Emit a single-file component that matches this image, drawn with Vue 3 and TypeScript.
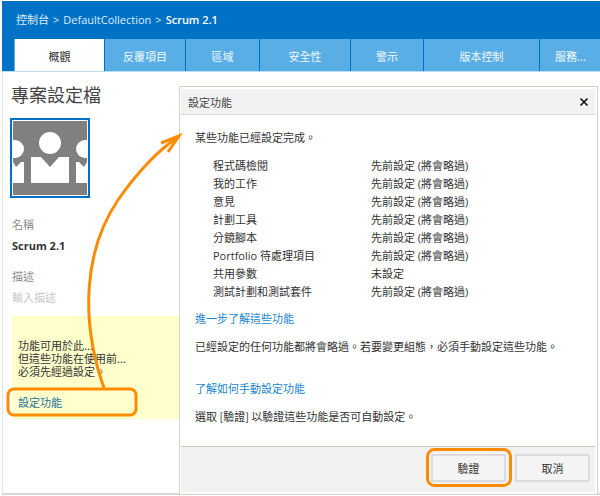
<script setup lang="ts">
interface Tab {
  label: string;
  width: number;
}

interface Feature {
  name: string;
  status: string;
}

const tabs: Tab[] = [
  { label: '概觀', width: 89 },
  { label: '反覆項目', width: 80 },
  { label: '區域', width: 73 },
  { label: '安全性', width: 90 },
  { label: '警示', width: 72 },
  { label: '版本控制', width: 115 },
  { label: '服務...', width: 61 },
];

const skipped = '先前設定 (將會略過)';

const features: Feature[] = [
  { name: '程式碼檢閱', status: skipped },
  { name: '我的工作', status: skipped },
  { name: '意見', status: skipped },
  { name: '計劃工具', status: skipped },
  { name: '分鏡腳本', status: skipped },
  { name: 'Portfolio 待處理項目', status: skipped },
  { name: '共用參數', status: '未設定' },
  { name: '測試計劃和測試套件', status: skipped },
];
</script>

<template>
  <div class="page">
    <header class="topbar">
      <div class="crumbs">
        <span>控制台</span>
        <span>&gt;</span>
        <span>DefaultCollection</span>
        <span>&gt;</span>
        <b>Scrum 2.1</b>
      </div>
      <nav class="tabs">
        <div
          v-for="(tab, i) in tabs"
          :key="tab.label"
          class="tab"
          :class="{ active: i === 0 }"
          :style="{ width: tab.width + 'px' }"
        >
          {{ tab.label }}
        </div>
      </nav>
    </header>

    <main class="profile">
      <h1>專案設定檔</h1>
      <div class="avatar">
        <svg width="74" height="74" viewBox="0 0 74 74">
          <rect width="74" height="74" fill="#808080" />
          <circle cx="37" cy="22" r="11" fill="#fff" />
          <circle cx="2" cy="28" r="9" fill="#fff" />
          <circle cx="72" cy="28" r="9" fill="#fff" />
          <path d="M18 36H28L37 46L46 36H56V62H18z" fill="#fff" />
          <path d="M0 41L3 46L8 41H11V62H0z" fill="#fff" />
          <path d="M74 41L71 46L66 41H63V62H74z" fill="#fff" />
        </svg>
      </div>
      <div class="label name-label">名稱</div>
      <div class="name">Scrum 2.1</div>
      <div class="label desc-label">描述</div>
      <div class="placeholder">輸入描述</div>
      <div class="notice">
        <p>功能可用於此...<br />但這些功能在使用前...<br />必須先經過設定。</p>
        <a>設定功能</a>
      </div>
    </main>

    <section class="dialog">
      <div class="dialog-title">
        <span>設定功能</span>
        <svg width="10" height="10" viewBox="0 0 10 10">
          <path d="M1.5 1.5l7 7M8.5 1.5l-7 7" stroke="#111" stroke-width="1.6" fill="none" />
        </svg>
      </div>
      <div class="dialog-body">
        <p class="intro">某些功能已經設定完成。</p>
        <div class="features">
          <template v-for="f in features" :key="f.name">
            <span>{{ f.name }}</span>
            <span>{{ f.status }}</span>
          </template>
        </div>
        <a class="learn">進一步了解這些功能</a>
        <p class="skip-note">已經設定的任何功能都將會略過。若要變更組態，必須手動設定這些功能。</p>
        <a class="manual">了解如何手動設定功能</a>
        <p class="verify-note">選取 [驗證] 以驗證這些功能是否可自動設定。</p>
      </div>
      <div class="dialog-footer">
        <button>驗證</button>
        <button>取消</button>
      </div>
    </section>

    <svg class="callouts" width="600" height="496" viewBox="0 0 600 496">
      <g fill="none" stroke="#fb8b00" stroke-width="3">
        <path d="M104 388C80 320 84 250 118 200C134 177 156 152 178 137" />
        <path d="M161 143L179 136L168 152" />
        <rect x="8" y="389" width="128" height="26" rx="6" />
        <rect x="427.5" y="449.5" width="83" height="36" rx="7" />
      </g>
    </svg>
  </div>
</template>

<style scoped>
.page {
  position: relative;
  width: 600px;
  height: 496px;
  overflow: hidden;
  box-sizing: border-box;
  padding-top: 1px;
  background: #fff;
  font-family: "Noto Sans CJK TC", sans-serif;
  font-size: 11px;
  color: #333;
}

.topbar {
  background: #0072c6;
  height: 70px;
  margin-left: 2px;
  display: flex;
  flex-direction: column;
  justify-content: flex-end;
}

.crumbs {
  flex: 1;
  display: flex;
  align-items: center;
  gap: 4px;
  padding: 0 0 2px 14px;
  color: #dcecf8;
  font-family: "Open Sans", "Noto Sans CJK TC", sans-serif;
  font-size: 11px;
}

.crumbs b {
  color: #fff;
  font-weight: 600;
}

.tabs {
  display: flex;
  height: 32px;
  padding-left: 13px;
}

.tab {
  flex: none;
  box-sizing: border-box;
  margin-right: 1px;
  padding-top: 1px;
  display: flex;
  align-items: center;
  justify-content: center;
  background: #59aee5;
  color: #f2f8fc;
  font-size: 11px;
}

.tab.active {
  background: #fff;
  color: #333;
  box-shadow: -1px 0 0 #59aee5;
}

.profile {
  box-sizing: border-box;
  height: 424px;
  margin-left: 2px;
  padding: 12px 0 0 7px;
  border-top: 1px solid #bcdcf2;
  border-left: 1px solid #e3e3e3;
  border-bottom: 2px solid #d8d8d8;
}

h1 {
  margin: 0 0 0 1px;
  font-size: 18px;
  font-weight: 400;
  line-height: 20px;
  color: #444;
}

.avatar {
  width: 76px;
  height: 76px;
  margin-top: 14px;
  border: 2px solid #0072c6;
  display: flex;
  align-items: center;
  justify-content: center;
}

.label {
  color: #8c8c8c;
  line-height: 16px;
}

.name-label {
  margin: 18px 0 0 2px;
}

.name {
  margin: 6px 0 0 2px;
  font-family: "Open Sans", sans-serif;
  font-weight: 700;
  line-height: 16px;
  color: #333;
}

.desc-label {
  margin: 14px 0 0 2px;
}

.placeholder {
  margin: 5px 0 0 2px;
  color: #c8c8c8;
  line-height: 16px;
}

.notice {
  box-sizing: border-box;
  width: 167px;
  height: 103px;
  margin: 11px 0 0 2px;
  padding: 23px 0 0 6px;
  background: #ffffcc;
  color: #333;
}

.notice p {
  margin: 0;
  line-height: 13px;
}

.notice a {
  display: block;
  margin-top: 16px;
  color: #1f6f9f;
}

.dialog {
  position: absolute;
  left: 179px;
  top: 86px;
  box-sizing: border-box;
  width: 419px;
  height: 409px;
  display: flex;
  flex-direction: column;
  background: #fff;
  border: 1px solid #d3d3c8;
  padding: 2px 2px 2px 1px;
}

.dialog-title {
  height: 25px;
  flex: none;
  display: flex;
  align-items: center;
  justify-content: space-between;
  padding: 0 6px 0 7px;
  background: #f2f2f2;
  border-bottom: 1px solid #deded6;
  color: #444;
}

.dialog-body {
  flex: 1;
  padding: 13px 0 0 14px;
  color: #333;
}

.dialog-body p {
  margin: 0;
  line-height: 18px;
}

.dialog-body a {
  display: block;
  color: #1a86d0;
  line-height: 18px;
}

.features {
  display: grid;
  grid-template-columns: 158px auto;
  grid-auto-rows: 18px;
  align-items: center;
  margin: 10px 0 0 18px;
  font-family: "Open Sans", "Noto Sans CJK TC", sans-serif;
}

.dialog-body .learn {
  margin-top: 9px;
}

.dialog-body .skip-note {
  margin-top: 10px;
}

.dialog-body .manual {
  margin-top: 24px;
}

.dialog-body .verify-note {
  margin-top: 10px;
}

.dialog-footer {
  flex: none;
  height: 46px;
  display: flex;
  justify-content: flex-end;
  align-items: flex-start;
  gap: 9px;
  padding: 7px 5px 0 0;
  box-sizing: border-box;
  background: #f2f2f2;
  border-top: 1px solid #c8c8c0;
}

.dialog-footer button {
  width: 75px;
  height: 28px;
  box-sizing: border-box;
  background: #f4f4f4;
  border: 2px solid #dcdcdc;
  font: inherit;
  color: #333;
  padding: 0;
}

.callouts {
  position: absolute;
  left: 0;
  top: 0;
  pointer-events: none;
}
</style>

<style>
html,
body {
  margin: 0;
  background: #fff;
}
</style>
